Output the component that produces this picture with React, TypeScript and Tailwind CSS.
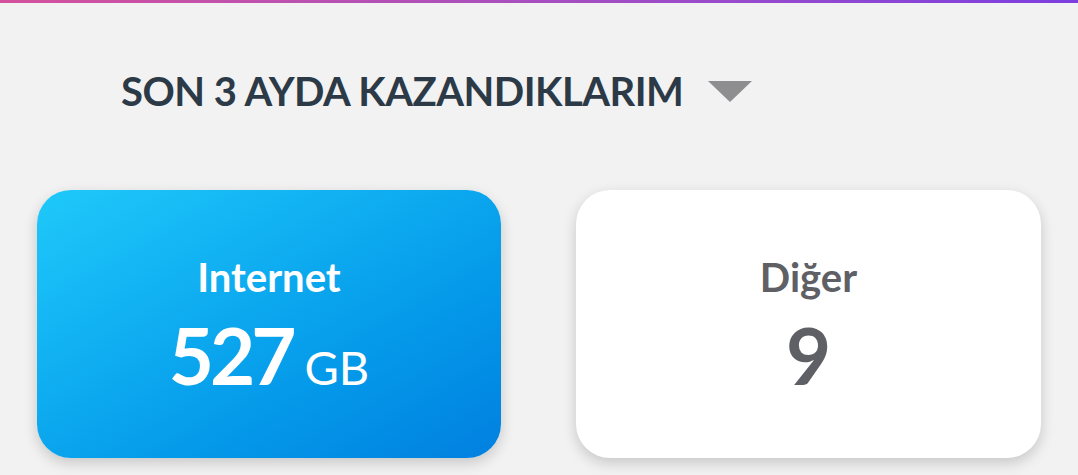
import React from 'react';

const font = { fontFamily: 'Lato, "Open Sans", sans-serif' };

const App: React.FC = () => {
  return (
    <div className="w-[1078px] h-[475px] bg-[#f2f2f2] overflow-hidden" style={font}>
      <div className="h-[3px] bg-gradient-to-r from-[#d4519c] to-[#7d3ee0]" />
      <div className="px-[37px]">
        <div className="flex gap-[25px] pl-[84px] pt-[63px] h-[187px] items-start">
          <h1 className="text-[40px] leading-[50px] font-bold text-[#2c3a47] tracking-[-0.5px]">
            SON 3 AYDA KAZANDIKLARIM
          </h1>
          <svg width="44" height="21" viewBox="0 0 44 21" className="mt-[15px]">
            <polygon points="0,0 44,0 22,21" fill="#8e8e91" />
          </svg>
        </div>
        <div className="flex gap-[75px]">
          <div className="w-[465px] h-[268px] rounded-[34px] bg-gradient-to-br from-[#1fc9fa] to-[#0280e0] shadow-[0_5px_14px_rgba(0,0,0,0.18)] flex flex-col items-center justify-center text-white">
            <div className="text-[40px] leading-[48px] font-bold">Internet</div>
            <div className="flex items-baseline gap-[12px] mt-[14px]">
              <span className="text-[78px] leading-[80px] font-bold tracking-[-4px]">527</span>
              <span className="text-[47px] leading-[50px] font-normal">GB</span>
            </div>
          </div>
          <div className="w-[466px] h-[268px] rounded-[34px] bg-white shadow-[0_5px_14px_rgba(0,0,0,0.18)] flex flex-col items-center justify-center text-[#5f6065]">
            <div className="text-[40px] leading-[48px] font-bold">Diğer</div>
            <div className="mt-[14px]">
              <span className="text-[78px] leading-[80px] font-bold">9</span>
            </div>
          </div>
        </div>
      </div>
    </div>
  );
};

export default App;
